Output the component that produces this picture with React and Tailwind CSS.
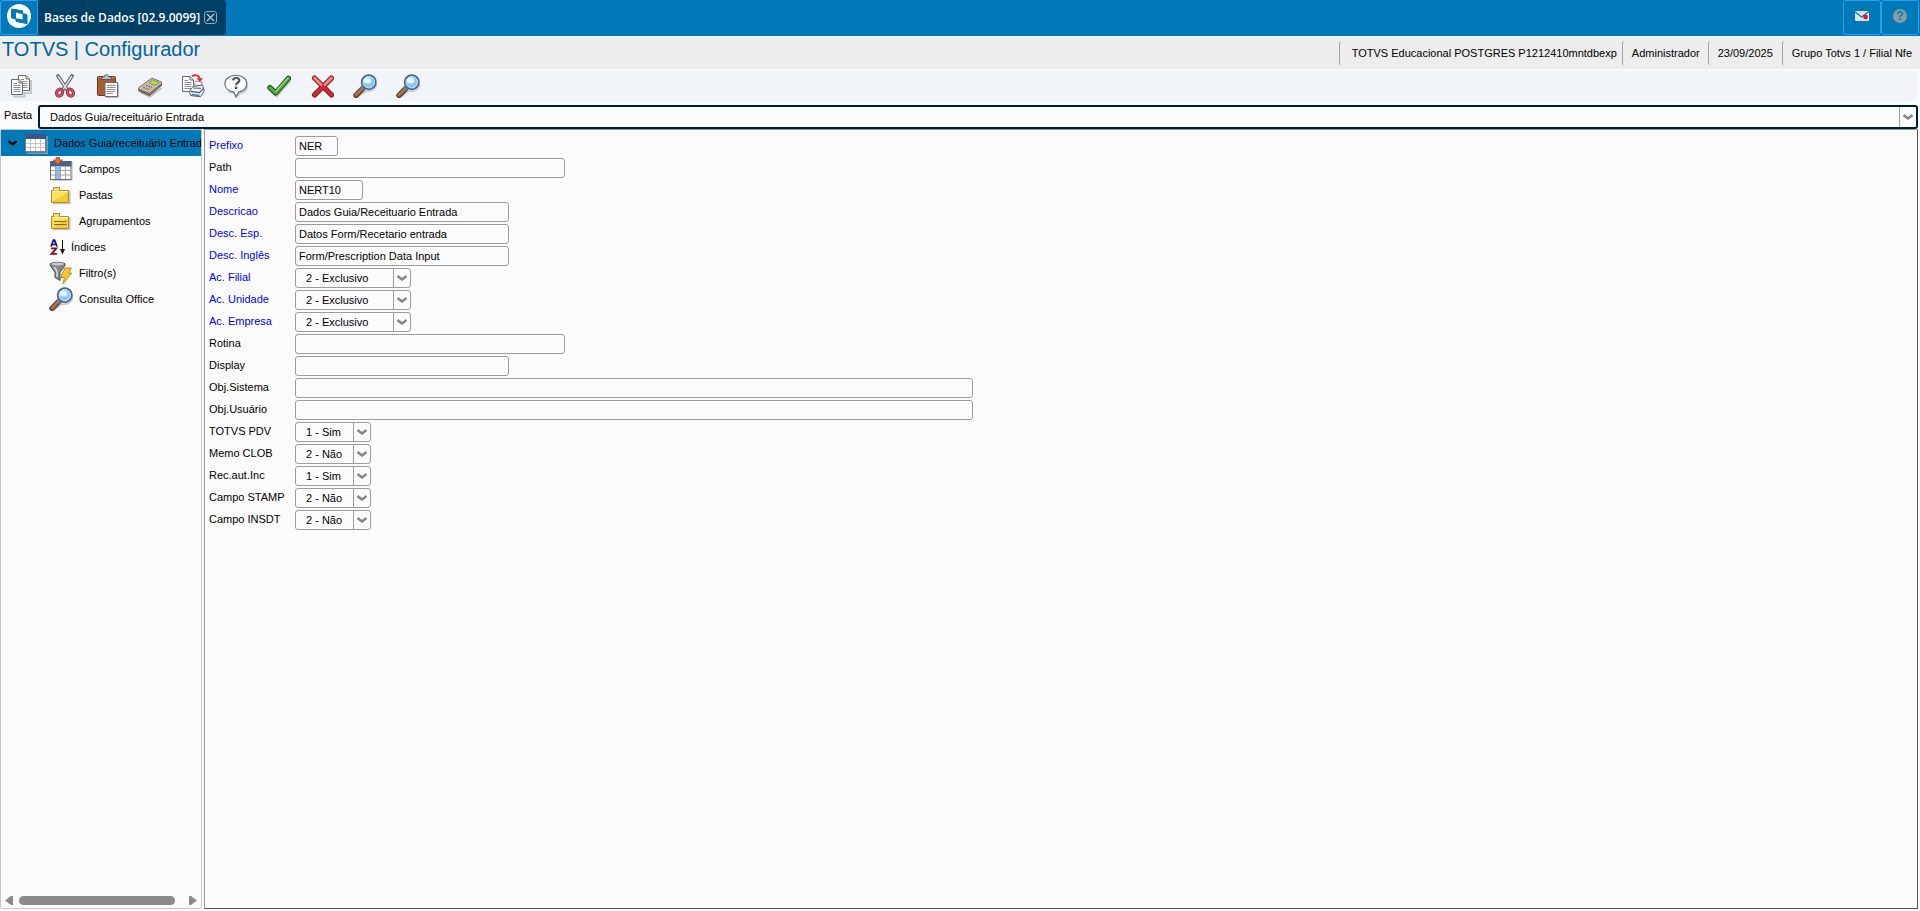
import React, { useState } from 'react';

function Svg({ className = 'size-6', children }) {
    return (
        <svg viewBox="0 0 24 24" className={`${className} shrink-0`} aria-hidden="true">
            {children}
        </svg>
    );
}

function TotvsLogo() {
    return (
        <Svg>
            <circle cx="12" cy="12" r="12" fill="#fff" />
            <path d="M4.5 5 15.5 6.8V9.4L20 10.6V19.6L9 17.4V15L4.5 13.8Z" fill="#0079b8" stroke="#0079b8" strokeLinejoin="round" />
            <path d="M9 8.6 15.6 10.2V15.6L9 14.2Z" fill="#fff" />
        </Svg>
    );
}

function Page({ x, y }) {
    return (
        <g transform={`translate(${x} ${y})`}>
            <path d="M.5 .5H8L11.5 4V15.5H.5Z" fill="#fff" stroke="#6b6b6b" />
            <path d="M8 .5V4H11.5" fill="none" stroke="#6b6b6b" />
            <path d="M2.5 4.5H6M2.5 6.5H9.5M2.5 8.5H9.5M2.5 10.5H9.5M2.5 12.5H9.5" stroke="#8d8d8d" />
        </g>
    );
}

function CopyIcon() {
    return (
        <Svg>
            <path d="M4 22.5H15.5V19H22V6" fill="none" stroke="#c4c7ca" strokeWidth="2" />
            <Page x="9" y="1" />
            <Page x="2" y="5" />
        </Svg>
    );
}

function CutIcon() {
    return (
        <Svg>
            <path d="M6 2 15 15.5M20 2 11 15.5" stroke="#5f6469" strokeWidth="3.6" strokeLinecap="round" />
            <path d="M6 2 15 15.5M20 2 11 15.5" stroke="#dde1e4" strokeWidth="1.5" />
            <ellipse cx="7.6" cy="18.6" rx="2.8" ry="3.6" transform="rotate(28 7.6 18.6)" fill="none" stroke="#8e2332" strokeWidth="3.2" />
            <ellipse cx="18.4" cy="18.6" rx="2.8" ry="3.6" transform="rotate(-28 18.4 18.6)" fill="none" stroke="#8e2332" strokeWidth="3.2" />
            <ellipse cx="7.6" cy="18.6" rx="2.8" ry="3.6" transform="rotate(28 7.6 18.6)" fill="none" stroke="#d9566a" strokeWidth="1.5" />
            <ellipse cx="18.4" cy="18.6" rx="2.8" ry="3.6" transform="rotate(-28 18.4 18.6)" fill="none" stroke="#d9566a" strokeWidth="1.5" />
        </Svg>
    );
}

function PasteIcon() {
    return (
        <Svg>
            <rect x="2.5" y="2.5" width="18" height="19" rx="1" fill="#a85d38" stroke="#70371d" />
            <path d="M3.5 3.5H19" stroke="#d1875c" />
            <path d="M6.5 5.5V3.5L9.5 2.5C9.5 0 13.5 0 13.5 2.5L16.5 3.5V5.5Z" fill="#b9bdc0" stroke="#53575a" />
            <path d="M11 23.5H23.5V10" fill="none" stroke="#bcbcbc" />
            <path d="M10 8.5H22.5V22.5H10Z" fill="#fff" stroke="#6b6b6b" />
            <path d="M12 11.5H20.5M12 13.5H20.5M12 15.5H20.5M12 17.5H20.5M12 19.5H18" stroke="#8d8d8d" />
        </Svg>
    );
}

function CalculatorIcon() {
    return (
        <Svg>
            <path d="M3 18.5 12 22.5 23.5 14" fill="none" stroke="#c0bfbe" strokeWidth="2" />
            <path d="M.8 13.5 14 4.2 23.4 8V11.5L11.5 21.5.8 17Z" fill="#85705f" stroke="#66564a" />
            <path d="M1 13.5 14 4.5 23.2 8.1 11.3 17.6Z" fill="#c9bbab" />
            <path d="M10.8 8.6 14.5 6 21 8.4 17.3 11.3Z" fill="#b4e052" stroke="#6d7f41" strokeWidth=".7" />
            <path d="M5.2 13.3 11.2 15.6M8 11.3 14.2 13.6" stroke="#84725f" strokeWidth="1.4" strokeDasharray="1.8 .8" />
            <path d="M1.2 14 11.3 18.2 23 8.8" fill="none" stroke="#f1eae2" strokeWidth=".9" />
        </Svg>
    );
}

function PrintIcon() {
    return (
        <Svg>
            <Page x="1" y="2" />
            <path d="M12.5 10.5 15 7 21 8 20.5 12Z" fill="#fff" stroke="#777" strokeWidth=".8" />
            <path d="M8.5 17.5 12 12.5 21.5 11 23.3 17 19.5 22.8 9.5 21.5Z" fill="#f0f3f6" stroke="#5b636c" />
            <path d="M9.5 17.3 18.5 18.6 22.5 14.5" fill="none" stroke="#4a5460" strokeWidth="1.2" />
            <path d="M12.2 14 20 14.4" stroke="#58708e" strokeWidth="1.2" />
            <path d="M10.5 20.5 18.5 21.5" stroke="#4c77b2" strokeWidth="1.3" />
            <path d="M11 2.2C14 .4 18 1 18.6 4.5" fill="none" stroke="#d9322e" strokeWidth="2" />
            <path d="M15.5 4.2H22L18.8 8Z" fill="#d9322e" />
        </Svg>
    );
}

function HelpBalloonIcon() {
    return (
        <Svg>
            <path d="M4 18 11.5 19.5 12.5 23.5 16 19.3C20.5 18.5 23.5 15.5 23.5 11" fill="none" stroke="#c5c8ca" strokeWidth="1.5" />
            <path d="M12 1.3C5.4 1.3.9 4.9.9 9.7S5 17.4 10 18L11.8 22.8 15 17.8C20 17.2 22.8 13.6 22.8 9.7 22.8 4.9 18.6 1.3 12 1.3Z" fill="#fff" stroke="#70747a" strokeWidth="1.3" />
            <path d="M9 6.4C9.5 3.2 15.5 3.2 15.3 6.6 15.2 8.8 12.2 8.7 12.1 11.2" fill="none" stroke="#50545a" strokeWidth="2.2" />
            <rect x="10.8" y="12.6" width="2.6" height="2.4" fill="#50545a" />
        </Svg>
    );
}

function CheckIcon() {
    return (
        <Svg>
            <path d="M3.5 15 9.5 21 22.5 6.5" fill="none" stroke="#c9cdca" strokeWidth="4" strokeLinecap="round" />
            <path d="M2.8 13.5 8.8 19 21.5 4.3" fill="none" stroke="#1d5c23" strokeWidth="5.2" strokeLinecap="round" strokeLinejoin="round" />
            <path d="M2.8 13.5 8.8 19 21.5 4.3" fill="none" stroke="#55ae3c" strokeWidth="3" strokeLinecap="round" strokeLinejoin="round" />
            <path d="M8.8 17.5 21 3.8" stroke="#a2dd83" strokeWidth="1.2" strokeLinecap="round" />
        </Svg>
    );
}

function CancelIcon() {
    return (
        <Svg>
            <path d="M5.5 5.5 22 21.5M22 5.5 5.5 21.5" stroke="#c9c6c6" strokeWidth="4.5" strokeLinecap="round" />
            <path d="M4.5 4 21.5 20.8M21.5 4 4.5 20.8" stroke="#7d1f20" strokeWidth="5.2" strokeLinecap="round" />
            <path d="M4.5 4 21.5 20.8M21.5 4 4.5 20.8" stroke="#d42a33" strokeWidth="3.2" strokeLinecap="round" />
            <path d="M4.5 4 11 10.4M21.5 4 15 10.4" stroke="#ee8a88" strokeWidth="2.8" strokeLinecap="round" />
        </Svg>
    );
}

function MagnifierIcon() {
    return (
        <Svg>
            <path d="M5 23.2 13 17C19 18 23.3 15 23.6 10" fill="none" stroke="#c5c7c9" strokeWidth="1.4" />
            <path d="M3 21.3 9.8 14.5" stroke="#5c3a2a" strokeWidth="5.4" strokeLinecap="round" />
            <path d="M3 21 9.4 14.6" stroke="#ab7252" strokeWidth="3" strokeLinecap="round" />
            <path d="M8.7 15.3 11.3 12.7" stroke="#7c8086" strokeWidth="4" />
            <circle cx="15.8" cy="8.2" r="7" fill="#62a9e6" stroke="#4a638c" strokeWidth="2" />
            <circle cx="15.8" cy="8.2" r="5.8" fill="#8cc8f4" stroke="#c9e5fa" />
            <ellipse cx="14.5" cy="6.4" rx="3.8" ry="3" fill="#e9f7ff" />
        </Svg>
    );
}

function TableIcon() {
    return (
        <Svg>
            <path d="M2 22.2H22.2V5" fill="none" stroke="#7d98aa" strokeWidth="1.6" />
            <rect x=".5" y="3.5" width="20" height="17" fill="#fff" stroke="#7f7f7f" />
            <path d="M0 3H21V8H0Z" fill="#3d5684" />
            <path d="M5.5 8V20M10.5 8V20M15.5 8V20M1 12.5H20M1 16.5H20" stroke="#c4c4c4" />
        </Svg>
    );
}

function FieldsIcon() {
    return (
        <Svg>
            <path d="M3 23.3H23.2V5" fill="none" stroke="#c5c5c5" />
            <rect x="1.5" y="4.5" width="20.5" height="18" fill="#fff" stroke="#6e6e6e" />
            <path d="M1 4H22.5V9.5H1Z" fill="#4a6188" />
            <path d="M6.5 9V22H11.5V9Z" fill="#8cc0f2" />
            <path d="M6.5 9V22M11.5 9V22M16.5 9V22M2 13.5H22M2 18H22" stroke="#a2a2a2" />
            <path d="M7 .5H10.5V3H13.5L8.8 7.5 4 3H7Z" fill="#ee6c3c" stroke="#9c3b22" strokeWidth=".7" />
        </Svg>
    );
}

function FolderIcon({ lines }) {
    return (
        <Svg>
            <path d="M4 20.5H20.8V8" fill="none" stroke="#c5c5c5" strokeWidth="1.5" />
            <path d="M2.5 19.5V7.5H4.5V4.5H10.5V7.5H19.5V19.5Z" fill="#f3cd2c" stroke="#b08c2b" />
            <path d="M5 7.5V5H10V7.5Z" fill="#f5dc7c" />
            <path d="M3 8H19V9.5H3Z" fill="#fdf3b0" />
            <path d="M3 9.5H19L3 18.5Z" fill="#f9e160" />
            {lines && <path d="M5 12.5H17.5M5 15.5H17.5" stroke="#80661d" />}
        </Svg>
    );
}

function SortIcon() {
    return (
        <svg viewBox="0 0 16 16" className="size-4 shrink-0" aria-hidden="true">
            <path d="M2 7.5 4.5 1H5.5L8 7.5M3.5 5.5H6.5" fill="none" stroke="#12127f" strokeWidth="1.7" />
            <path d="M2 9.3H7.3L2.5 14.8H8" fill="none" stroke="#8b1010" strokeWidth="1.8" />
            <path d="M13.5 1V12" stroke="#111" />
            <path d="M11 10H16L13.5 15.5Z" fill="#111" />
        </svg>
    );
}

function FilterIcon() {
    return (
        <Svg>
            <path d="M1.2 2.8C5 .8 12 .8 16 2.8V4.5L11 11.5V19.5L6 16.5V11.5L1.2 4.5Z" fill="#85888a" stroke="#4e5153" />
            <ellipse cx="8.6" cy="3" rx="6.3" ry="1.4" fill="#c9cbcc" />
            <path d="M5.5 6 8 10.5V16" fill="none" stroke="#d5d7d8" strokeWidth="1.6" />
            <path d="M16 7H22.3L19.5 12H22.8L14 22.8 15.5 16.5H11.5Z" fill="#fbc92d" stroke="#a5741c" strokeWidth=".8" />
        </Svg>
    );
}

function Chevron({ className }) {
    return (
        <svg viewBox="0 0 10 6" className={className} aria-hidden="true">
            <path d="M.5 1 5 4.5 9.5 1" fill="none" stroke="currentColor" strokeWidth="2.4" />
        </svg>
    );
}

const tools = [
    { name: 'Copiar', Icon: CopyIcon },
    { name: 'Recortar', Icon: CutIcon },
    { name: 'Colar', Icon: PasteIcon },
    { name: 'Calculadora', Icon: CalculatorIcon },
    { name: 'Imprimir', Icon: PrintIcon },
    { name: 'Ajuda', Icon: HelpBalloonIcon },
    { name: 'Confirmar', Icon: CheckIcon },
    { name: 'Cancelar', Icon: CancelIcon },
    { name: 'Pesquisar', Icon: MagnifierIcon },
    { name: 'Consultar', Icon: MagnifierIcon }
];

const tree = [
    { name: 'Campos', icon: <FieldsIcon /> },
    { name: 'Pastas', icon: <FolderIcon /> },
    { name: 'Agrupamentos', icon: <FolderIcon lines /> },
    { name: 'Índices', icon: <SortIcon /> },
    { name: 'Filtro(s)', icon: <FilterIcon /> },
    { name: 'Consulta Office', icon: <MagnifierIcon /> }
];

const exclusivo = ['1 - Compartilhado', '2 - Exclusivo'];
const simNao = ['1 - Sim', '2 - Não'];

const fields = [
    { id: 'prefixo', label: 'Prefixo', value: 'NER', width: 'w-[43px]', required: true },
    { id: 'path', label: 'Path', value: '', width: 'w-[270px]' },
    { id: 'nome', label: 'Nome', value: 'NERT10', width: 'w-[68px]', required: true },
    { id: 'descricao', label: 'Descricao', value: 'Dados Guia/Receituario Entrada', width: 'w-[214px]', required: true },
    { id: 'descEsp', label: 'Desc. Esp.', value: 'Datos Form/Recetario entrada', width: 'w-[214px]', required: true },
    { id: 'descIngles', label: 'Desc. Inglês', value: 'Form/Prescription Data Input', width: 'w-[214px]', required: true },
    { id: 'acFilial', label: 'Ac. Filial', value: '2 - Exclusivo', width: 'w-[116px]', required: true, options: exclusivo },
    { id: 'acUnidade', label: 'Ac. Unidade', value: '2 - Exclusivo', width: 'w-[116px]', required: true, options: exclusivo },
    { id: 'acEmpresa', label: 'Ac. Empresa', value: '2 - Exclusivo', width: 'w-[116px]', required: true, options: exclusivo },
    { id: 'rotina', label: 'Rotina', value: '', width: 'w-[270px]' },
    { id: 'display', label: 'Display', value: '', width: 'w-[214px]' },
    { id: 'objSistema', label: 'Obj.Sistema', value: '', width: 'w-[678px]' },
    { id: 'objUsuario', label: 'Obj.Usuário', value: '', width: 'w-[678px]' },
    { id: 'totvsPdv', label: 'TOTVS PDV', value: '1 - Sim', width: 'w-[76px]', options: simNao },
    { id: 'memoClob', label: 'Memo CLOB', value: '2 - Não', width: 'w-[76px]', options: simNao },
    { id: 'recAutInc', label: 'Rec.aut.Inc', value: '1 - Sim', width: 'w-[76px]', options: simNao },
    { id: 'campoStamp', label: 'Campo STAMP', value: '2 - Não', width: 'w-[76px]', options: simNao },
    { id: 'campoInsdt', label: 'Campo INSDT', value: '2 - Não', width: 'w-[76px]', options: simNao }
];

function Field({ field, value, onChange }) {
    return (
        <div className="flex h-5">
            <label htmlFor={field.id} className={`w-[86px] shrink-0 leading-[18px] ${field.required ? 'text-[#0000ff]' : ''}`}>
                {field.label}
            </label>
            {field.options ? (
                <div className={`relative ${field.width}`}>
                    <select
                        id={field.id}
                        value={value}
                        onChange={onChange}
                        className="block h-5 w-full appearance-none rounded-[3px] border border-[#9c9c9c] bg-[#fbfbfb] pl-[10px] outline-none"
                    >
                        {field.options.map((o) => (
                            <option key={o}>{o}</option>
                        ))}
                    </select>
                    <span className="pointer-events-none absolute inset-y-0 right-0 flex w-[18px] items-center border-l border-[#9c9c9c] pl-[3px] text-[#858585]">
                        <Chevron className="h-[6px] w-[10px]" />
                    </span>
                </div>
            ) : (
                <input
                    id={field.id}
                    type="text"
                    value={value}
                    onChange={onChange}
                    className={`${field.width} h-5 rounded-[3px] border border-[#9c9c9c] bg-[#fbfbfb] px-[3px] outline-none`}
                />
            )}
        </div>
    );
}

export default function App() {
    const [values, setValues] = useState(Object.fromEntries(fields.map((f) => [f.id, f.value])));

    const handleChange = (id) => (e) => {
        setValues({ ...values, [id]: e.target.value });
    };

    return (
        <div className="flex min-h-screen flex-col bg-[#fbfbfb] font-['Liberation_Sans',Arial,sans-serif] text-[11px] text-black">
            <header className="flex h-9 items-start bg-[#0079b8]">
                <button aria-label="Menu" className="flex h-[35px] w-[38px] items-start justify-center rounded-[3px] border border-[#2f9df0] pt-[3px]">
                    <TotvsLogo />
                </button>
                <div className="flex h-[35px] w-[188px] items-center gap-1 rounded-[3px] bg-[#004064] pl-[6px] font-['Open_Sans',sans-serif] text-xs font-semibold whitespace-nowrap text-white">
                    Bases de Dados [02.9.0099]
                    <button aria-label="Fechar aba" className="flex size-[13px] shrink-0 items-center justify-center rounded-[3px] border border-[#8fa7b6]">
                        <svg viewBox="0 0 9 9" className="size-[9px] shrink-0" aria-hidden="true">
                            <path d="M1 1 8 8M8 1 1 8" stroke="#b8c8d2" strokeWidth="1.4" />
                        </svg>
                    </button>
                </div>
                <div className="mr-px ml-auto flex">
                    <button aria-label="Mensagens" className="flex h-[35px] w-[38px] items-center justify-center rounded-[3px] border border-[#2f9df0] pb-[3px]">
                        <svg viewBox="0 0 14 10" className="h-[10px] w-[14px]" aria-hidden="true">
                            <rect width="14" height="10" rx="1" fill="#dce3e8" />
                            <path d="M0 1 6.5 6 14 .5" fill="none" stroke="#0079b8" strokeWidth="1.3" />
                            <circle cx="10.5" cy="6" r="2.4" fill="#ff0a14" />
                        </svg>
                    </button>
                    <button aria-label="Ajuda" className="flex h-[35px] w-[38px] items-center justify-center rounded-[3px] border border-[#2f9df0] pb-[3px]">
                        <span className="flex size-[14px] items-center justify-center rounded-full bg-[#8b9aa3] text-xs font-bold text-[#0079b8]">?</span>
                    </button>
                </div>
            </header>

            <div className="flex h-[33px] items-start justify-between bg-[#ededed]">
                <h1 className="pl-[2px] text-[20px] leading-[26px] text-[#00649c]">TOTVS | Configurador</h1>
                <div className="flex pt-[5px] leading-[24px]">
                    <span className="rounded-[3px] border-l border-[#a0a0a0] pr-[5px] pl-3">TOTVS Educacional POSTGRES P1212410mntdbexp</span>
                    <span className="rounded-[3px] border-l border-[#a0a0a0] pr-2 pl-[9px]">Administrador</span>
                    <span className="rounded-[3px] border-l border-[#a0a0a0] pr-[9px] pl-[9px]">23/09/2025</span>
                    <span className="rounded-[3px] border-l border-[#a0a0a0] pr-2 pl-[9px]">Grupo Totvs 1 / Filial Nfe</span>
                </div>
            </div>

            <div className="mt-[2px] mr-[2px] flex h-[30px] items-center gap-[19px] bg-[#f1f5f9] pl-[9px]">
                {tools.map(({ name, Icon }) => (
                    <button key={name} aria-label={name} title={name}>
                        <Icon />
                    </button>
                ))}
            </div>

            <div className="mt-1 mr-[2px] flex h-6">
                <label htmlFor="pasta" className="w-[38px] shrink-0 pl-1 leading-[21px]">Pasta</label>
                <div className="relative flex-1">
                    <select id="pasta" className="block h-6 w-full appearance-none rounded-[3px] border-2 border-[#001e32] bg-[#fbfbfb] pl-[10px] outline-none">
                        <option>Dados Guia/receituário Entrada</option>
                    </select>
                    <span className="pointer-events-none absolute inset-y-[2px] right-[2px] flex w-[17px] items-center border-l border-[#9c9c9c] pl-[3px] text-[#858585]">
                        <Chevron className="h-[6px] w-[10px]" />
                    </span>
                </div>
            </div>

            <div className="mr-[2px] mb-[2px] flex flex-1 gap-[2px]">
                <aside className="flex w-[202px] shrink-0 flex-col rounded-[2px] border border-[#c4c4c4]">
                    <button className="flex h-[26px] items-center overflow-hidden bg-[#0079b8] pl-[7px] text-left whitespace-nowrap">
                        <Chevron className="h-[6px] w-[9px] shrink-0" />
                        <span className="pr-[5px] pl-2">
                            <TableIcon />
                        </span>
                        Dados Guia/receituário Entrada
                    </button>
                    {tree.map((item) => (
                        <button key={item.name} className="flex h-[26px] items-center gap-[6px] pl-[48px] text-left">
                            {item.icon}
                            {item.name}
                        </button>
                    ))}
                    <div className="mt-auto flex h-4 items-center px-1 text-[#8a8a8a]">
                        <svg viewBox="0 0 8 9" className="h-[9px] w-2" aria-hidden="true">
                            <path d="M0 4.5 6 0H8V9H6Z" fill="currentColor" />
                        </svg>
                        <div className="mr-[14px] ml-[6px] h-[9px] flex-1 rounded-full bg-[#8a8a8a]" />
                        <svg viewBox="0 0 8 9" className="h-[9px] w-2" aria-hidden="true">
                            <path d="M8 4.5 2 0H0V9H2Z" fill="currentColor" />
                        </svg>
                    </div>
                </aside>

                <main className="flex flex-1 flex-col gap-[2px] border border-t-[#8b9a9a] border-r-[#555] border-b-[#555] border-l-[#8b9a9a] pt-[6px] pl-1">
                    {fields.map((field) => (
                        <Field key={field.id} field={field} value={values[field.id]} onChange={handleChange(field.id)} />
                    ))}
                </main>
            </div>
        </div>
    );
}
